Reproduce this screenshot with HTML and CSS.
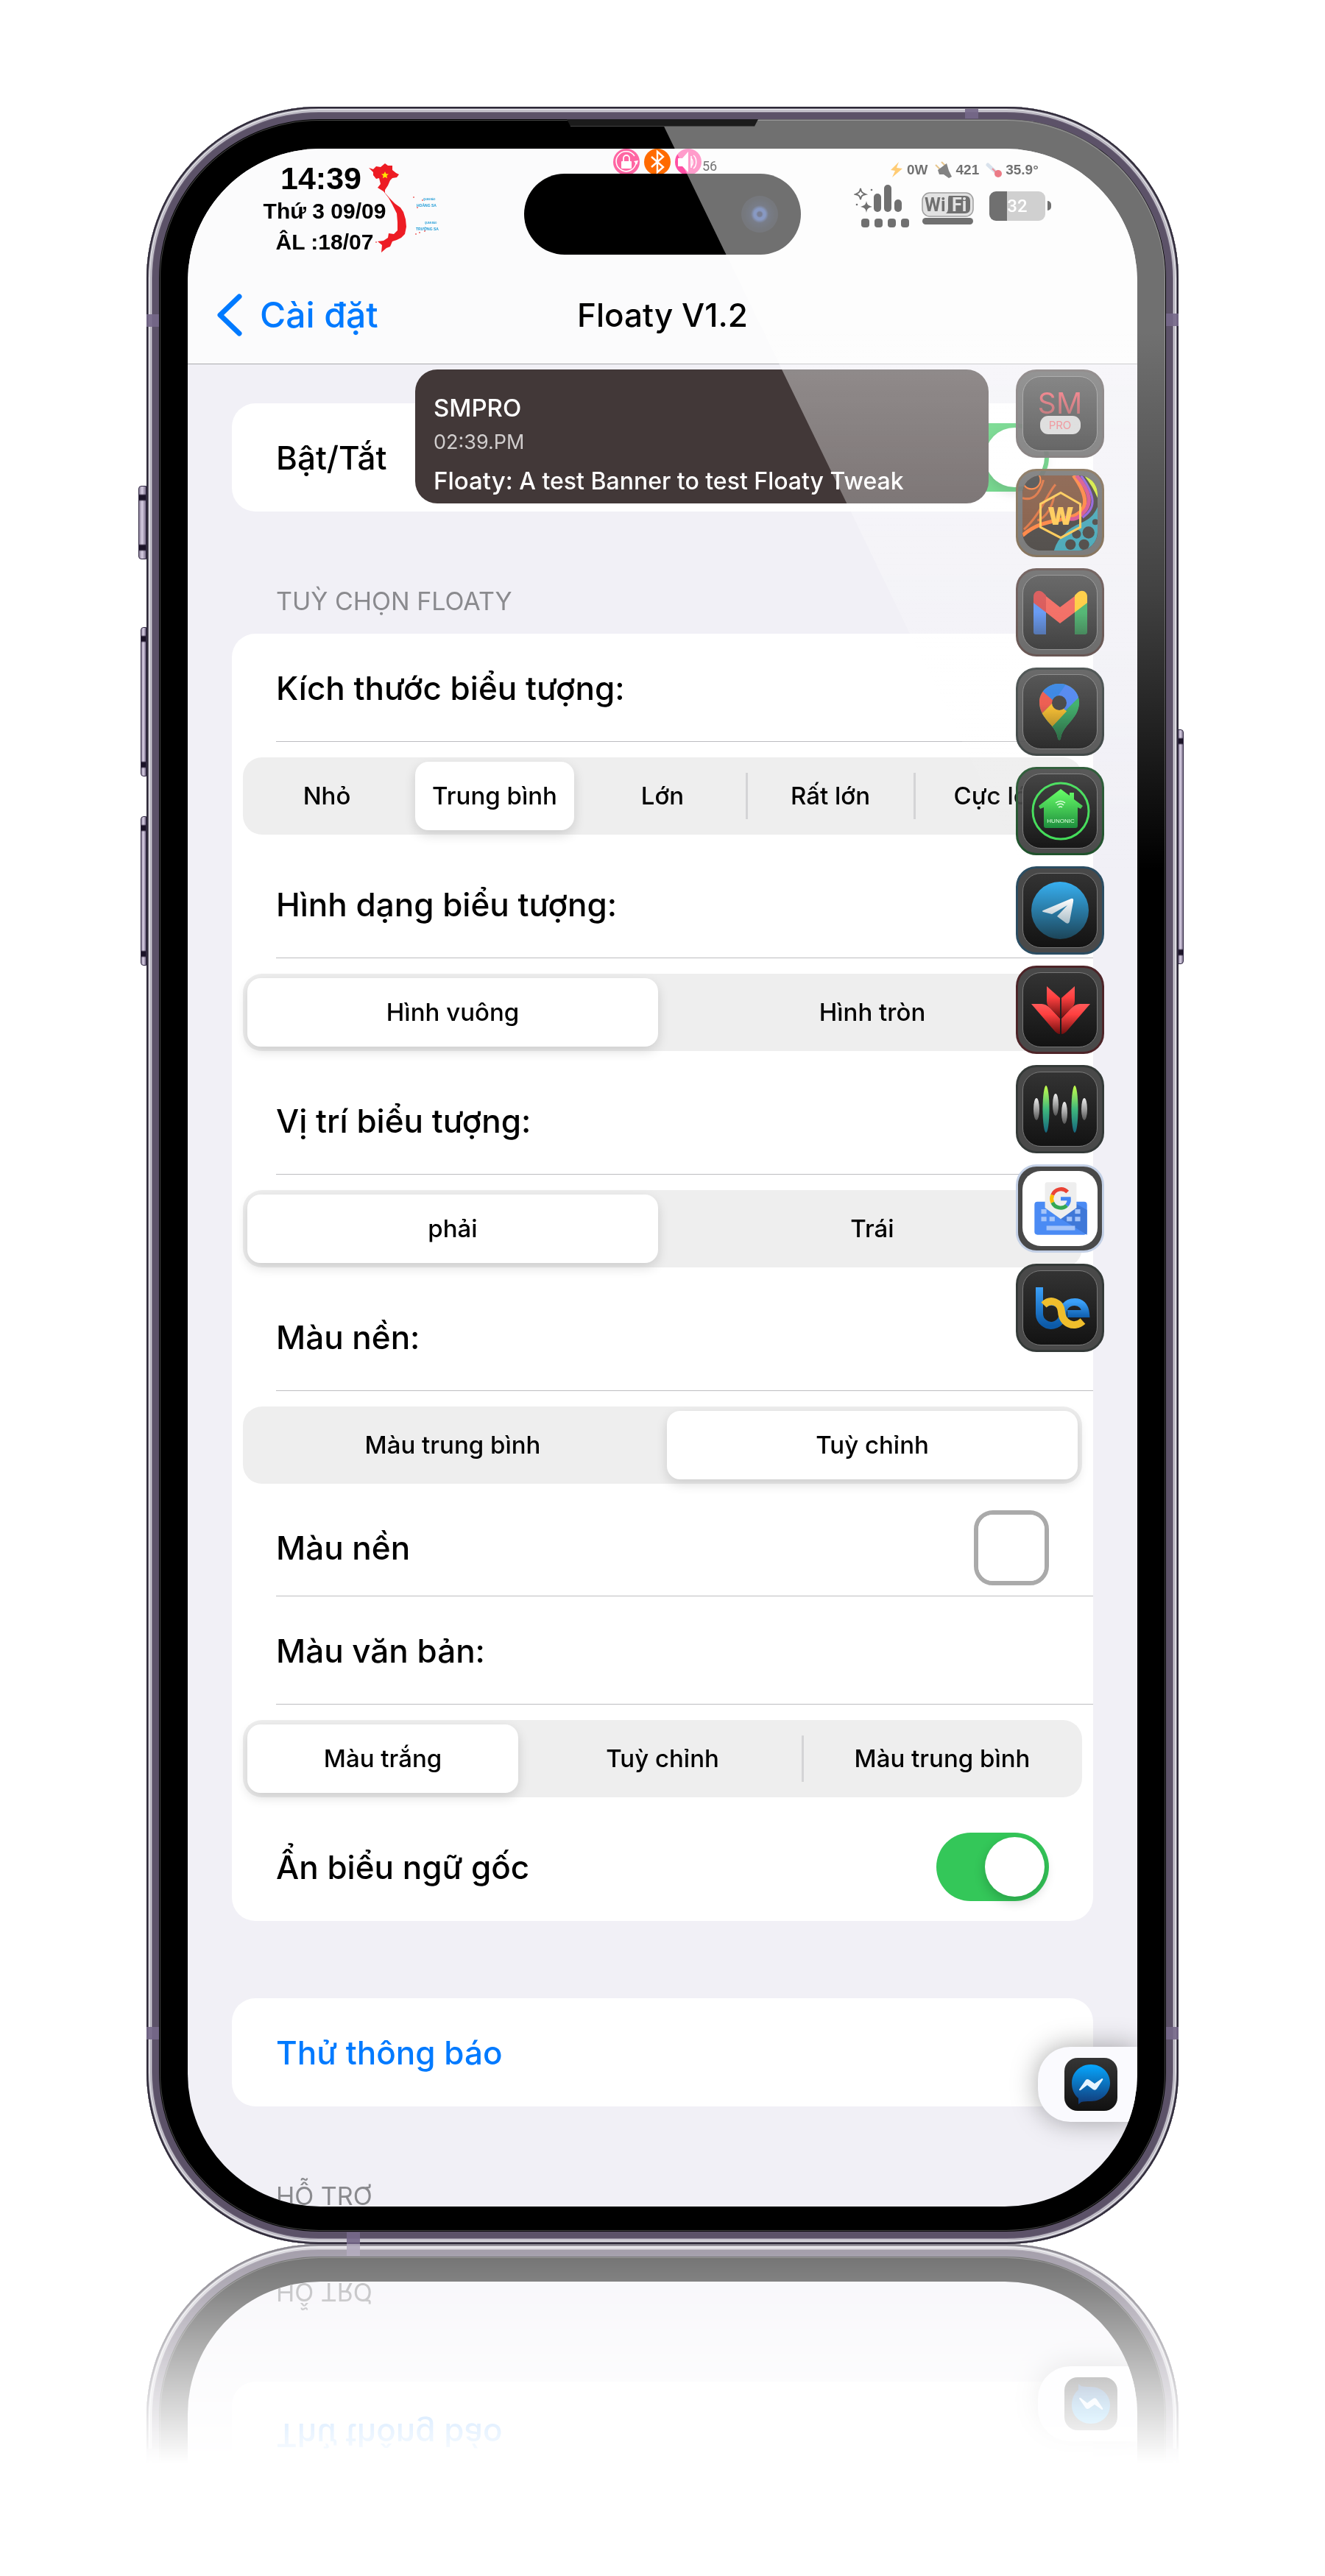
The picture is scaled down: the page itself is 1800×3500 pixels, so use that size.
FILE: index.html
```html
<!DOCTYPE html>
<html lang="vi">
<head>
<meta charset="utf-8">
<meta name="viewport" content="width=device-width, initial-scale=1">
<title>Floaty V1.2</title>
<link rel="stylesheet" href="styles.css">
</head>
<body>
<main class="stage">
<div class="phone">
  <span class="key key-action"></span>
  <span class="key key-up"></span>
  <span class="key key-down"></span>
  <span class="key key-power"></span>
  <span class="band band-lt"></span>
  <span class="band band-lb"></span>
  <span class="band band-rt"></span>
  <span class="band band-rb"></span>
  <span class="band-h band-top"></span>
  <span class="band-h band-bottom"></span>
  <span class="earpiece"></span>

  <div class="screen">
    <header class="header">
      <div class="status">
        <div class="clock">
          <strong class="time">14:39</strong>
          <span class="date">Thứ 3 09/09</span>
          <span class="date">ÂL :18/07</span>
          <svg class="map" viewBox="0 0 104 124" aria-hidden="true">
            <path fill="#ed1c24" d="M0 6L6 8 10 4 16 5 22 0 26 3 32 3 32 9 37 13 41 15 38 19 32 20 29 23 26 30 22 36 22 40 29 48 36 55 43 60 47 66 50 76 51 86 49 96 44 101 38 104 32 106 29 113 24 115 17 121 18 111 12 106 20 105 26 101 27 95 34 96 39 91 39 80 38 68 32 56 27 47 20 38 12 33 16 28 14 20 10 21 6 16 6 12z"/>
            <path fill="#ffe600" d="M22 11l1.500 3.200 3.500.3-2.700 2.300.9 3.500-3.200-1.900-3.200 1.900.9-3.500-2.700-2.300 3.500-.3z"/>
            <g fill="#e66"><circle cx="61" cy="46" r="1"/><circle cx="73" cy="50" r="1"/><circle cx="66" cy="60" r="1"/><circle cx="64" cy="96" r="1"/><circle cx="69" cy="94" r="1"/><circle cx="76" cy="92" r="1"/><circle cx="10" cy="107" r="1"/></g>
            <g fill="#1c9ad6" font-family="Liberation Sans, sans-serif" font-weight="700"><text x="74" y="50" font-size="3">QUẦN ĐẢO</text><text x="65" y="59" font-size="5">HOÀNG SA</text><text x="76" y="82" font-size="3">QUẦN ĐẢO</text><text x="64" y="91" font-size="5">TRƯỜNG SA</text></g>
          </svg>
        </div>

        <div class="center">
          <div class="toggles">
            <svg class="dot" viewBox="0 0 36 36" aria-hidden="true"><circle cx="18" cy="18" r="18" fill="#ff66a3"/><path d="M29 10a13.500 13.500 0 1 0 2 9" fill="none" stroke="#fff" stroke-width="1.600"/><path d="M28 17l6-1-2 6z" fill="#fff"/><rect x="11" y="17" width="14" height="10" rx="1" fill="#fff"/><path d="M14 17v-4a4 4 0 0 1 8 0v4" fill="none" stroke="#fff" stroke-width="1.800"/></svg>
            <svg class="dot" viewBox="0 0 36 36" aria-hidden="true"><circle cx="18" cy="18" r="18" fill="#ff6a00"/><path d="M10 11l16 14-8 7V4l8 7-16 14" fill="none" stroke="#fff" stroke-width="2.400"/></svg>
            <svg class="dot" viewBox="0 0 36 36" aria-hidden="true"><circle cx="18" cy="18" r="18" fill="#ff4fa3"/><path d="M4 13h6l8-9v28l-8-8H4z" fill="#fff"/><path d="M22 10v16M25 9c5 4 5 14 0 18M22 13c3 3 3 8 0 11" fill="none" stroke="#fff" stroke-width="1.500"/></svg>
            <span class="volume">56</span>
          </div>
          <div class="island"><span class="camera"></span></div>
        </div>

        <div class="meters">
          <div class="readings">
            <svg width="18" height="22" viewBox="0 0 18 22" aria-hidden="true"><path d="M12 0L1 11l6 1-4 9 14-12-8-1z" fill="#ffa50a"/></svg>
            <span>0W</span>
            <svg width="24" height="24" viewBox="0 0 24 24" aria-hidden="true"><path d="M1 5l7 7M9 1l7 7" stroke="#d59a35" stroke-width="2"/><path d="M4 12L16 3l3 10 4 8-4 2-7-5-6 0z" fill="#222"/></svg>
            <span>421</span>
            <svg width="22" height="22" viewBox="0 0 22 22" aria-hidden="true"><path d="M3 4l13 12" stroke="#bcd" stroke-width="5" stroke-linecap="round"/><path d="M9 9l7 7" stroke="#e03a4c" stroke-width="2"/><circle cx="17" cy="16" r="5" fill="#dc1428"/></svg>
            <span>35.9°</span>
          </div>
          <div class="signals">
            <svg width="76" height="60" viewBox="0 0 76 60" aria-hidden="true"><path d="M9 6c1 5 2 6 7 8-5 1-6 2-7 7-1-5-2-6-7-7 5-2 6-3 7-8z" fill="none" stroke="#000" stroke-width="1.800"/><path d="M17 23c1 5 2 6 8 8-6 1-7 3-8 8-1-5-2-7-8-8 6-2 7-3 8-8z"/><circle cx="24" cy="8" r="1.300"/><circle cx="4" cy="28" r="1.300"/><rect x="27" y="13" width="10" height="25" rx="5"/><rect x="41" y="1" width="10" height="37" rx="5"/><rect x="55" y="21" width="10" height="17" rx="5"/><rect x="10" y="47" width="11" height="12" rx="4"/><rect x="28" y="47" width="11" height="12" rx="4"/><rect x="46" y="47" width="11" height="12" rx="4"/><rect x="64" y="47" width="11" height="12" rx="4"/></svg>
            <svg class="wifi" width="72" height="46" viewBox="0 0 72 46" aria-hidden="true"><rect x="1" y="1" width="69" height="32" rx="10" fill="#ccc" stroke="#555" stroke-width="1.500"/><path d="M37 5h22q7 0 7 7v10q0 7-7 7H33q3-2 3-7V10q0-4 1-5z" fill="#000"/><g font-family="Roboto, sans-serif" font-weight="700" font-size="25"><text x="4" y="26" fill="#000">Wi</text><text x="41" y="26" fill="#ccc">Fi</text></g><rect x="1" y="35" width="69" height="9" rx="4.500"/></svg>
            <span class="battery">32</span>
          </div>
        </div>
      </div>

      <nav class="nav">
        <a class="back" href="#settings"><svg width="34" height="58" viewBox="0 0 34 58" aria-hidden="true"><path d="M30 4L4 29l26 25" fill="none" stroke="#007aff" stroke-width="7" stroke-linecap="round" stroke-linejoin="round"/></svg>Cài đặt</a>
        <h1 class="title">Floaty V1.2</h1>
      </nav>
    </header>

    <div class="content">
      <section class="card">
        <label class="row">Bật/Tắt<input class="switch" type="checkbox" checked></label>
      </section>

      <h2 class="label">TUỲ CHỌN FLOATY</h2>
      <section class="card">
        <h3 class="row" id="size">Kích thước biểu tượng:</h3>
        <div class="segments" role="radiogroup" aria-labelledby="size">
          <label class="seg"><input type="radio" name="size">Nhỏ</label>
          <label class="seg"><input type="radio" name="size" checked>Trung bình</label>
          <label class="seg"><input type="radio" name="size">Lớn</label>
          <label class="seg"><input type="radio" name="size">Rất lớn</label>
          <label class="seg"><input type="radio" name="size">Cực lớn</label>
        </div>
        <h3 class="row" id="shape">Hình dạng biểu tượng:</h3>
        <div class="segments" role="radiogroup" aria-labelledby="shape">
          <label class="seg"><input type="radio" name="shape" checked>Hình vuông</label>
          <label class="seg"><input type="radio" name="shape">Hình tròn</label>
        </div>
        <h3 class="row" id="side">Vị trí biểu tượng:</h3>
        <div class="segments" role="radiogroup" aria-labelledby="side">
          <label class="seg"><input type="radio" name="side" checked>phải</label>
          <label class="seg"><input type="radio" name="side">Trái</label>
        </div>
        <h3 class="row" id="fill">Màu nền:</h3>
        <div class="segments" role="radiogroup" aria-labelledby="fill">
          <label class="seg"><input type="radio" name="fill">Màu trung bình</label>
          <label class="seg"><input type="radio" name="fill" checked>Tuỳ chỉnh</label>
        </div>
        <label class="row row-color">Màu nền<input class="swatch" type="color" value="#ffffff"></label>
        <h3 class="row" id="ink">Màu văn bản:</h3>
        <div class="segments" role="radiogroup" aria-labelledby="ink">
          <label class="seg"><input type="radio" name="ink" checked>Màu trắng</label>
          <label class="seg"><input type="radio" name="ink">Tuỳ chỉnh</label>
          <label class="seg"><input type="radio" name="ink">Màu trung bình</label>
        </div>
        <label class="row">Ẩn biểu ngữ gốc<input class="switch" type="checkbox" checked></label>
      </section>

      <section class="card card-spaced">
        <button class="row row-action" type="button">Thử thông báo</button>
      </section>
      <h2 class="label label-cut">HỖ TRỢ</h2>
    </div>

    <aside class="banner">
      <strong class="app">SMPRO</strong>
      <time class="when">02:39.PM</time>
      <p class="message"><b>Floaty:</b> A test Banner to test Floaty Tweak</p>
    </aside>

    <svg width="0" height="0" class="defs" aria-hidden="true"><defs>
      <linearGradient id="gRed" x2="0" y2="1"><stop offset="0" stop-color="#ff5a5a"/><stop offset=".35" stop-color="#ff4040"/><stop offset="1" stop-color="#6e0f0f"/></linearGradient>
      <linearGradient id="gSm" x2="0" y2="1"><stop offset="0" stop-color="#ff4050"/><stop offset="1" stop-color="#8e2c30"/></linearGradient>
      <linearGradient id="gGreen" x2="0" y2="1"><stop offset="0" stop-color="#5cff5c"/><stop offset="1" stop-color="#158a36"/></linearGradient>
      <linearGradient id="gTele" x2="0" y2="1"><stop offset="0" stop-color="#37aff0"/><stop offset="1" stop-color="#1c4559"/></linearGradient>
      <linearGradient id="gPlane" x2="0" y2="1"><stop offset="0" stop-color="#fff"/><stop offset="1" stop-color="#a9bcc6"/></linearGradient>
      <linearGradient id="gBar" x2="0" y2="1"><stop offset="0" stop-color="#c6ff4a"/><stop offset=".5" stop-color="#3fb87c"/><stop offset="1" stop-color="#14667f"/></linearGradient>
      <linearGradient id="gGrey" x2="0" y2="1"><stop offset="0" stop-color="#eee"/><stop offset="1" stop-color="#555"/></linearGradient>
      <linearGradient id="gBe" x2="0" y2="1"><stop offset="0" stop-color="#3ba0f8"/><stop offset="1" stop-color="#0c5aa8"/></linearGradient>
      <linearGradient id="gShade" x2="0" y2="1"><stop offset="0" stop-color="#000" stop-opacity="0"/><stop offset="1" stop-color="#000" stop-opacity=".5"/></linearGradient>
      <linearGradient id="gMsg" x2="0" y2="1"><stop offset="0" stop-color="#06a7ff"/><stop offset="1" stop-color="#123a78"/></linearGradient>
      <clipPath id="pin"><path d="M49 12c15 0 27 11 27 25 0 12-6 20-14 29-7 8-10 13-11 20q-2 6-4 0c-1-7-4-12-11-20-8-9-14-17-14-29 0-14 12-25 27-25z"/></clipPath>
      <clipPath id="tile"><rect width="100" height="100" rx="22"/></clipPath>
    </defs></svg>

    <div class="dock">
      <button class="icon tint-plain" type="button" aria-label="SMPRO"><svg viewBox="0 0 100 100"><text x="50" y="50" text-anchor="middle" font-family="Inter, sans-serif" font-size="39" fill="url(#gSm)">SM</text><rect x="23" y="53" width="55" height="25" rx="11" fill="#ccc"/><text x="50" y="71" text-anchor="middle" font-family="Inter, sans-serif" font-size="15" fill="#e8606a">PRO</text></svg></button>
      <button class="icon tint-gold" type="button" aria-label="W"><svg class="full" viewBox="0 0 100 100"><g clip-path="url(#tile)"><rect width="100" height="100" fill="#120c08"/><path d="M0 0h72c20 25 22 42 6 52-20 10-50 5-78 27z" fill="#5b2407"/><path d="M0 80c25-22 50-18 68-26 20-8 20-26 0-54" fill="none" stroke="#ff5a00" stroke-width="5"/><path d="M2 72c22-20 30-46 42-60M20 60c12-4 20-20 22-32M0 30q20 6 28-24" fill="none" stroke="#d24400" stroke-width="3"/><circle cx="12" cy="6" r="12" fill="#111" stroke="#ff5a00" stroke-width="2"/><path d="M72 0c18 20 24 40 4 54-6 6-16 4-20 2" fill="none" stroke="#c81a6a" stroke-width="5"/><path d="M78 0c20 28 20 44 2 56" fill="none" stroke="#6a2bd0" stroke-width="3"/><path d="M82 0c8 10 14 20 18 30V0z" fill="#c8e600"/><path d="M90 0l10 14V0z" fill="#12b48c"/><path d="M100 42C90 66 72 60 56 78q-10 8-14 22h58z" fill="#0a8aa0"/><g fill="#120c08"><circle cx="88" cy="76" r="8"/><circle cx="72" cy="78" r="6"/><circle cx="82" cy="92" r="7"/><circle cx="64" cy="92" r="7"/><circle cx="97" cy="62" r="4"/></g><path d="M51 23l26 15v31L51 83 24 69V38z" fill="none" stroke="#ffb81c" stroke-width="3"/><text x="51" y="66" text-anchor="middle" font-family="Inter, sans-serif" font-weight="900" font-size="32" fill="#ffb81c">W</text></g></svg></button>
      <button class="icon tint-rust" type="button" aria-label="Gmail"><svg viewBox="0 0 100 100"><path d="M14 36l17 13v31H17q-3 0-3-3z" fill="#3c7df0"/><path d="M87 36L70 49v31h14q3 0 3-3z" fill="#22a24c"/><path d="M31 28l19 15 20-15v22L50 65 31 50z" fill="#f0463a"/><path d="M14 37v-8c0-8 8-11 14-5l3 3v23z" fill="#cf2b2b"/><path d="M87 37v-8c0-8-8-11-14-5l-3 3v23z" fill="#ffc010"/><path d="M14 50h17l19 15 20-15h17v30H70V50L50 65 31 50v30H14z" fill="url(#gShade)" opacity=".7"/></svg></button>
      <button class="icon tint-grey" type="button" aria-label="Maps"><svg viewBox="0 0 100 100"><g clip-path="url(#pin)"><rect width="100" height="100" fill="#23a455"/><path d="M20 10h60v16L56 50 30 30z" fill="#3a76ee"/><path d="M20 10h40L42 36 28 24z" fill="#1b74e0"/><path d="M0 10l26 12 16 14-28 28z" fill="#ea4335"/><path d="M22 56l20-20 18 14-24 24z" fill="#fbb912"/><path d="M36 74l43-46v60H40z" fill="#23a455"/><rect y="40" width="100" height="50" fill="url(#gShade)"/></g><circle cx="49" cy="38" r="10" fill="#2c2c2c"/></svg></button>
      <button class="icon tint-green" type="button" aria-label="Hunonic"><svg viewBox="0 0 100 100"><circle cx="51" cy="50" r="38" fill="none" stroke="#3fdc55" stroke-width="3"/><path d="M51 20l12 9v-4h6v9l12 9-3 4-4-2v25q0 3-3 3H31q-3 0-3-3V45l-5 2-2-4z" fill="url(#gGreen)"/><path d="M44 39q7-5 13 0M46 42q5-4 9 0M48 45q3-2 5 0" fill="none" stroke="#dfd" stroke-width="1.500"/><text x="51" y="66" text-anchor="middle" font-family="Liberation Sans, sans-serif" font-size="8" fill="#dfd">HUNONIC</text></svg></button>
      <button class="icon tint-blue" type="button" aria-label="Telegram"><svg viewBox="0 0 100 100"><circle cx="50" cy="50" r="39" fill="url(#gTele)"/><path d="M27 50l38-16q4-1 3 4l-5 27q-1 4-5 2L46 58l14-15-21 12-12-3q-2-1 0-2z" fill="url(#gPlane)"/></svg></button>
      <button class="icon tint-red" type="button" aria-label="Phoenix"><svg viewBox="0 0 100 100" fill="url(#gRed)"><path d="M32 18l18 16v27L34 45q-2-3-2-7z"/><path d="M70 18L52 34v27l16-16q2-3 2-7z"/><path d="M11 42h14q6 0 12 6l13 14v21q-4 0-8-5z"/><path d="M91 42H77q-6 0-12 6L52 62v21q4 0 8-5z"/></svg></button>
      <button class="icon tint-dark" type="button" aria-label="Voice"><svg viewBox="0 0 100 100"><g fill="url(#gGrey)"><ellipse cx="18" cy="50" rx="4" ry="15"/><ellipse cx="44" cy="44" rx="4" ry="15"/><ellipse cx="56" cy="55" rx="4" ry="15"/><ellipse cx="83" cy="50" rx="4" ry="15"/></g><g fill="url(#gBar)"><ellipse cx="31" cy="50" rx="4.500" ry="32"/><ellipse cx="70" cy="50" rx="4.500" ry="32"/></g></svg></button>
      <button class="icon icon-light" type="button" aria-label="Gboard"><svg viewBox="0 0 100 100"><rect x="16" y="41" width="70" height="44" rx="4" fill="#4b8bf4"/><path d="M50 63l36 22V52L72 44z" fill="#3f78d8"/><g fill="#a5c4f9"><rect x="25" y="51" width="7" height="6"/><rect x="70" y="51" width="7" height="6"/><rect x="25" y="61" width="7" height="6"/><rect x="36" y="61" width="7" height="6"/><rect x="59" y="61" width="7" height="6"/><rect x="70" y="61" width="7" height="6"/><rect x="32" y="73" width="38" height="6"/></g><path d="M33 15h36q3 0 3 3v31L51 64 30 49V18q0-3 3-3z" fill="#eee"/><g fill="none" stroke-width="5"><path d="M60 28a12 12 0 0 0-20 4" stroke="#ea4335"/><path d="M40 32a12 12 0 0 0 0 10" stroke="#fbbc05"/><path d="M40 42a12 12 0 0 0 19 4" stroke="#34a853"/><path d="M59 46a12 12 0 0 0 3-9H51" stroke="#4285f4"/></g></svg></button>
      <button class="icon tint-dark" type="button" aria-label="be"><svg viewBox="0 0 100 100" fill="none" stroke-width="10"><path d="M22 22v36a16 16 0 1 0 8-14" stroke="url(#gBe)"/><path d="M54 64c-2-14 5-22 16-22 8 0 14 5 15 16H60" stroke="url(#gBe)"/><path d="M28 46c10-10 23-3 24 9 1 16 17 24 29 13" stroke="#f0be2c"/></svg></button>
    </div>

    <div class="handle">
      <button class="messenger" type="button" aria-label="Messenger"><svg viewBox="0 0 72 72"><path d="M36 9c15 0 26 11 26 25S51 59 36 59c-6 0-10 0-13 1l-4 3v-8C13 50 10 43 10 34 10 20 21 9 36 9z" fill="url(#gMsg)"/><path d="M20 43l9-13q2-2 5 0l7 5 10-7q2 0 1 2l-8 12q-2 3-5 1l-8-6-9 7q-2 1-2-1z" fill="#e6f4ff"/></svg></button>
    </div>
  </div>
  <div class="glare"></div>
</div>
</main>
</body>
</html>
```
FILE: styles.css
```css
* { box-sizing: border-box; }

body {
  margin: 0;
  background: #fff;
  color: #000;
  font-family: Inter, "Noto Sans", sans-serif;
}

h1, h2, h3, p { margin: 0; font-weight: 500; }
button { border: 0; padding: 0; font: inherit; cursor: pointer; }

.stage { padding: 145px 24px 451px; }

/* Handset */
.phone {
  position: relative;
  max-width: 1402px;
  margin: 0 auto;
  padding: 57px 56px 51px;
  border-radius: 234px;
  background: #000;
  box-shadow:
    inset 0 0 0 2px #2e2938,
    inset 0 0 0 3px #6f6a78,
    inset 0 0 0 5px #dddce2,
    inset 0 0 0 6px #aeabb5,
    inset 0 0 0 7px #d4d2da,
    inset 0 0 0 8px #847c8e,
    inset 0 0 0 17px #5c5268,
    inset 0 0 0 18px #000,
    inset 0 0 0 19px #444;
  -webkit-box-reflect: below 0 linear-gradient(to top, rgba(0, 0, 0, .57), rgba(0, 0, 0, .48) 60px, transparent 298px);
}

.key {
  position: absolute;
  left: -8px;
  width: 8px;
  border: 1px solid #2e2540;
  border-radius: 4px 0 0 4px;
  background:
    linear-gradient(transparent 10px, #1c1428 12px 18px, transparent 20px calc(100% - 20px), #1c1428 calc(100% - 18px) calc(100% - 12px), transparent calc(100% - 10px)),
    linear-gradient(90deg, #8e849c, #d8cfe4 45%, #7d728c);
}
.key-action { top: 515px; left: -11px; width: 11px; height: 100px; }
.key-up { top: 707px; height: 203px; }
.key-down { top: 964px; height: 203px; }
.key-power { top: 846px; left: auto; right: -7px; height: 319px; border-radius: 0 4px 4px 0; }

.band, .band-h { position: absolute; background: #75688a; opacity: .9; }
.band { width: 17px; height: 17px; }
.band-lt { left: 0; top: 282px; }
.band-lb { left: 0; bottom: 278px; }
.band-rt { right: 0; top: 281px; }
.band-rb { right: 0; bottom: 278px; }
.band-h { width: 18px; height: 16px; }
.band-top { right: 272px; top: 3px; height: 13px; }
.band-bottom { left: 272px; bottom: 0; }

.earpiece {
  position: absolute;
  top: 17px;
  left: calc(50% - 130px);
  width: 260px;
  height: 10px;
  background: #1b1b1b;
  border-bottom: 1px solid #444;
  clip-path: polygon(0 0, 100% 0, 98% 100%, 2% 100%);
  z-index: 1;
}

.glare {
  position: absolute;
  inset: 17px 18px 17px 18px;
  border-radius: 216px;
  overflow: hidden;
  pointer-events: none;
}
.glare::before {
  content: "";
  display: block;
  height: 1020px;
  background: linear-gradient(rgba(255, 255, 255, .44) 290px, rgba(255, 255, 255, .26) 640px, transparent);
  clip-path: polygon(49.800% 0, 100% 0, 100% 100%, 86% 100%);
}

.screen {
  position: relative;
  overflow: hidden;
  border-radius: 180px;
  background: #f1f0f6;
}

/* Status bar */
.header { background: #fbfbfc; border-bottom: 1px solid #a9aaae; }
.status { display: grid; grid-template-columns: 1fr 376px 1fr; height: 144px; }

.clock {
  position: relative;
  display: flex;
  flex-direction: column;
  align-items: center;
  width: 168px;
  margin-left: 102px;
  padding-top: 16px;
  font-family: "Liberation Sans", Arial, sans-serif;
  font-weight: 700;
  white-space: nowrap;
}
.time { font-size: 43px; line-height: 48px; margin-right: 10px; }
.date { font-size: 30px; line-height: 42px; }
.map { position: absolute; left: 144px; top: 20px; width: 104px; height: 124px; }

.center { display: flex; flex-direction: column; }
.toggles { display: flex; gap: 6px; height: 34px; padding-left: 121px; }
.dot { width: 36px; height: 36px; flex: none; }
.volume { font: 18px/20px Roboto, sans-serif; padding-top: 14px; margin-left: -5px; }
.island {
  position: relative;
  display: flex;
  align-items: center;
  justify-content: flex-end;
  height: 110px;
  padding-right: 31px;
  border-radius: 55px;
  background: #000;
}
.camera {
  width: 50px;
  height: 50px;
  border-radius: 50%;
  background: radial-gradient(circle, #101a40 0 8%, #2c4a94 14% 22%, #10182c 34%, #0b0f18 60%);
}

.meters { padding: 16px 0 0 72px; font-family: "Liberation Sans", Arial, sans-serif; }
.readings { display: flex; align-items: center; height: 26px; padding-left: 49px; gap: 5px; font-size: 19px; font-weight: 700; }
.readings svg:nth-of-type(n + 2) { margin-left: 4px; }
.signals { display: flex; align-items: center; gap: 16px; padding-top: 6px; }
.wifi { margin-top: 8px; }
.battery {
  position: relative;
  width: 76px;
  height: 40px;
  margin-left: 4px;
  border-radius: 9px;
  background: linear-gradient(90deg, #000 24px, #ababab 24px);
  color: #fff;
  font: 500 24px/40px Roboto, sans-serif;
  text-align: center;
}
.battery::after {
  content: "";
  position: absolute;
  right: -8px;
  top: 13px;
  width: 5px;
  height: 13px;
  border-radius: 0 6px 6px 0;
  background: #000;
}

.nav {
  display: grid;
  grid-template-columns: 1fr auto 1fr;
  align-items: center;
  height: 148px;
  padding: 16px 40px 0;
  line-height: 56px;
}
.back { display: flex; align-items: center; gap: 24px; color: #007aff; text-decoration: none; font-weight: 500; font-size: 48px; }
.title { font-size: 44px; }

/* Settings list */
.content { padding: 53px 60px 0; }
.card { border-radius: 32px; background: #fff; }
.card-spaced { margin-top: 105px; }

.row {
  position: relative;
  display: flex;
  align-items: center;
  justify-content: space-between;
  width: 100%;
  height: 147px;
  padding: 0 60px;
  font-size: 44px;
  line-height: 56px;
  font-weight: 500;
}
h3.row::after, .row-color::after {
  content: "";
  position: absolute;
  left: 60px;
  right: 0;
  bottom: 0;
  height: 1px;
  background: #bdbdc0;
}
.row-color { height: 132px; }
.row-action { background: none; color: #007aff; }

.label { padding: 102px 60px 24px; font-size: 34px; line-height: 40px; font-weight: 400; color: #8a8a8e; }
.label-cut { height: 136px; padding-bottom: 0; }

.segments {
  display: flex;
  gap: 12px;
  margin: 21px 15px;
  padding: 6px;
  border-radius: 26px;
  background: #eee;
}
.seg {
  position: relative;
  flex: 1 1 0;
  height: 93px;
  border-radius: 18px;
  font-size: 33px;
  line-height: 93px;
  font-weight: 500;
  text-align: center;
  white-space: nowrap;
}
.seg input { position: absolute; opacity: 0; inset: 0; margin: 0; }
.seg:has(:checked) { background: #fff; box-shadow: 0 6px 16px rgba(0, 0, 0, .14); }
.seg:not(:has(:checked)) + .seg:not(:has(:checked))::before {
  content: "";
  position: absolute;
  left: -7px;
  top: 15px;
  width: 3px;
  height: 63px;
  background: #d4d4d6;
}

.switch {
  appearance: none;
  width: 153px;
  height: 93px;
  margin: 0;
  border-radius: 47px;
  background: #34c759;
}
.switch::before {
  content: "";
  display: block;
  width: 81px;
  height: 81px;
  margin: 6px 6px 6px 66px;
  border-radius: 50%;
  background: #fff;
  box-shadow: 0 6px 16px rgba(0, 0, 0, .2);
}

.swatch {
  appearance: none;
  width: 102px;
  height: 102px;
  padding: 0;
  border: 6px solid #aaa;
  border-radius: 26px;
  background: #fff;
}
.swatch::-webkit-color-swatch-wrapper { padding: 0; }
.swatch::-webkit-color-swatch { border: 0; border-radius: 18px; }

/* Floating notification */
.banner {
  position: absolute;
  left: 309px;
  right: 202px;
  top: 300px;
  height: 182px;
  padding: 30px 25px 0;
  border-radius: 30px;
  background: #423838;
  color: #fff;
}
.app, .when, .message { display: block; }
.app { font-size: 33px; line-height: 44px; font-weight: 500; }
.when { font-size: 27px; line-height: 50px; color: #d0cdcd; }
.message { font-size: 32px; line-height: 54px; font-weight: 500; white-space: nowrap; }
.message b { font-size: 33px; font-weight: 500; }

/* Floating application icons */
.defs { position: absolute; }
.dock {
  position: absolute;
  top: 300px;
  right: 45px;
  display: flex;
  flex-direction: column;
  gap: 15px;
}
.icon {
  width: 120px;
  height: 120px;
  padding: 6px;
  border: 3px solid #343a38;
  border-radius: 28px;
  background: rgba(62, 62, 62, .94);
}
.icon svg {
  display: block;
  width: 102px;
  height: 102px;
  border: 1px solid #777;
  border-radius: 25px;
  background: linear-gradient(#333, #131313);
}
.icon svg.full { border: 0; }
.icon-light { border-color: #c3d0e6; }
.icon-light svg { border: 0; background: #fff; }
.tint-plain { border-color: #4a4242; }
.tint-gold { border-color: #5a4020; }
.tint-rust { border-color: #442e2a; }
.tint-grey { border-color: #2c3433; }
.tint-green { border-color: #1d5029; }
.tint-blue { border-color: #2b4d62; }
.tint-red { border-color: #4d2428; }
.tint-dark { border-color: #343a38; }

.handle {
  position: absolute;
  right: 0;
  bottom: 115px;
  width: 135px;
  height: 102px;
  padding: 15px 0 0 36px;
  border-radius: 44px 0 0 44px;
  background: #fafafe;
  box-shadow: 0 0 36px rgba(0, 0, 0, .35);
}
.messenger { width: 72px; height: 72px; border-radius: 18px; background: linear-gradient(#353535, #111); }
.messenger svg { display: block; width: 72px; height: 72px; }
```
